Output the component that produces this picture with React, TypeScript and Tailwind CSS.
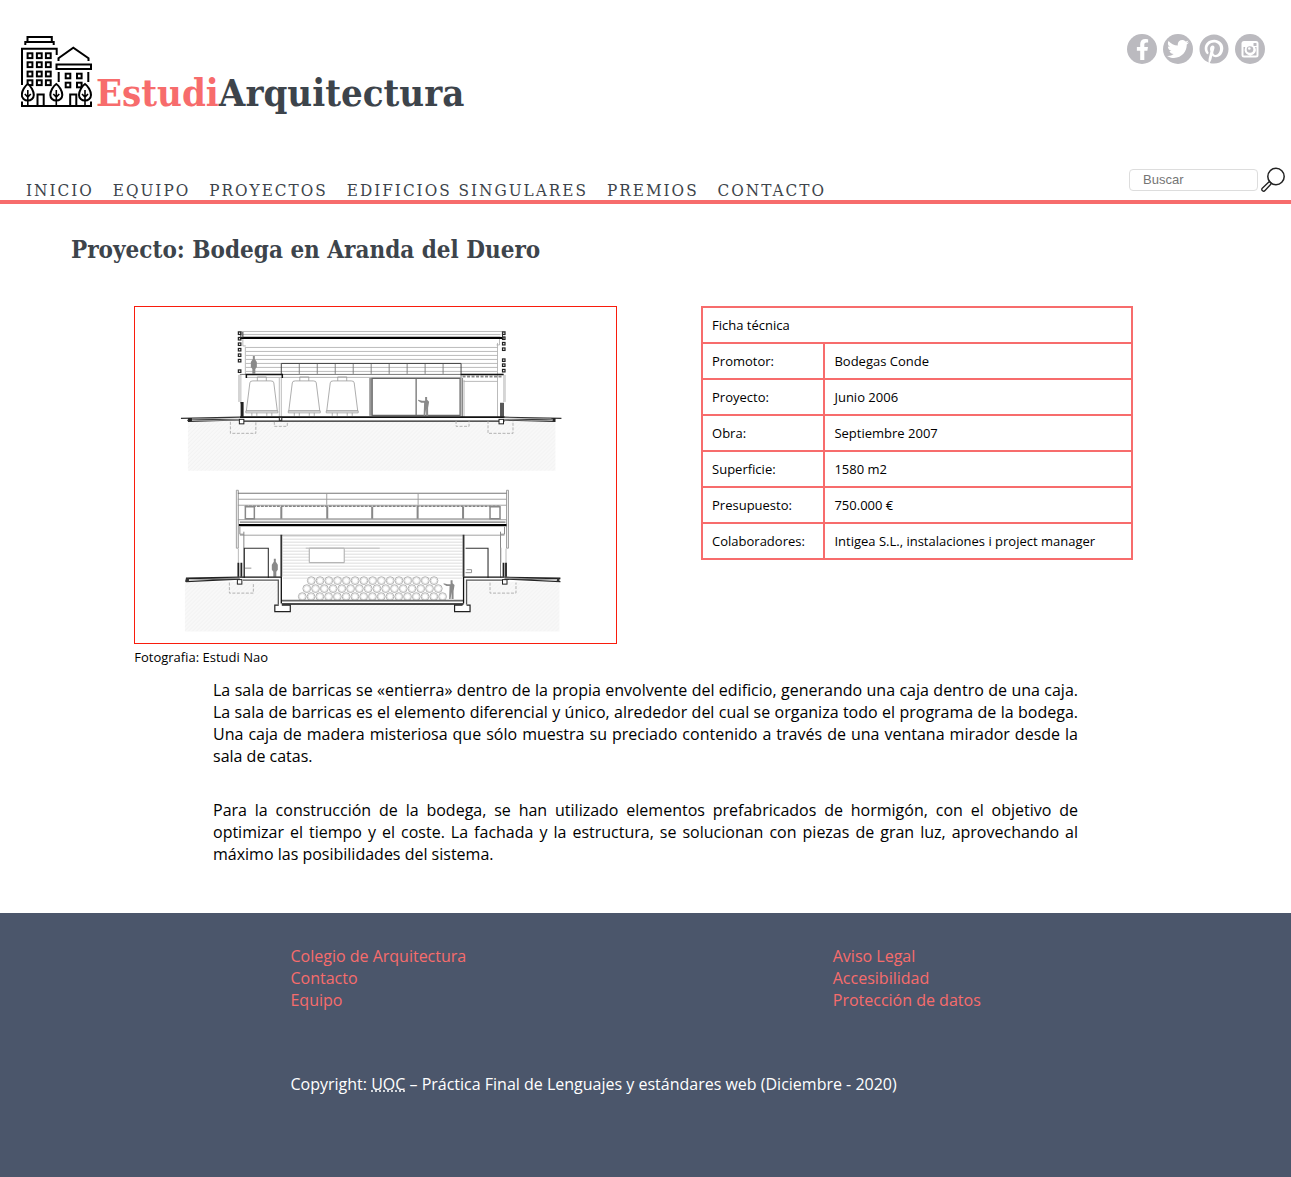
import React from "react";
import { FaFacebookF, FaTwitter, FaPinterest } from "react-icons/fa";

const slab = "font-['Roboto_Slab','DejaVu_Serif_Condensed','DejaVu_Serif',serif]";

function BuildingsLogo() {
  const tree = (x: number) => (
    <g key={x}>
      <path
        d={`M${x} 84 C${x + 3} 86 ${x + 6} 91 ${x + 6} 95 A6 5.5 0 0 1 ${x - 6} 95 C${x - 6} 91 ${x - 3} 86 ${x} 84Z`}
        fill="#fff"
      />
      <path d={`M${x} 90V106M${x - 3} 94L${x} 97L${x + 3} 94`} strokeWidth="1.6" />
    </g>
  );
  return (
    <svg viewBox="21 36 71 71" className="h-[71px] w-[71px] shrink-0" fill="none" stroke="#000" strokeWidth="2" aria-hidden="true">
      <path d="M25.3 45V42H53.7V45M27.5 42V37H51.8V42M22 85V48.7H56.7V55" />
      {[55.7, 64.7, 74, 82.7].map((y) =>
        [30, 39.3, 48.3].map((x) => <rect key={`${x}-${y}`} x={x - 2.4} y={y - 2.4} width="4.8" height="4.8" />)
      )}
      <path d="M58.5 61V58.3L73.3 47.7L88.5 58.3V61M56.5 64.5H91V69H56.5ZM58.7 72V82M88.3 72V82" />
      {[76, 85].map((y) =>
        [68, 79.3].map((x) => <rect key={`${x}-${y}`} x={x - 2.3} y={y - 2.3} width="4.6" height="4.6" />)
      )}
      <path d="M37.5 106V94.5H43.7V106M70.2 106V94.5H76.3V106" />
      {[27.8, 56.3, 85].map(tree)}
      <path d="M22 101.5V106H91V101.5" />
    </svg>
  );
}

function InstagramGlyph() {
  return (
    <svg viewBox="0 0 30 30" className="h-full w-full" aria-hidden="true">
      <circle cx="15" cy="15" r="15" fill="#bbbabf" />
      <rect x="6.5" y="7" width="17" height="16.5" rx="2.5" fill="#fff" />
      <path d="M8.5 13H10.5A5.5 5.5 0 1 0 20 13H21.500V21.500H8.500Z" fill="#bbbabf" />
      <circle cx="15" cy="15.500" r="5" fill="#fff" />
      <circle cx="15" cy="15.500" r="3.300" fill="#bbbabf" />
      <circle cx="14.300" cy="14.500" r="1.300" fill="#fff" />
      <rect x="18.500" y="9" width="3" height="3" rx="0.500" fill="#bbbabf" />
    </svg>
  );
}

function SearchGlyph() {
  return (
    <svg viewBox="0 0 26 26" className="h-[26px] w-[26px]" fill="none" stroke="#222" strokeWidth="1.3" aria-hidden="true">
      <circle cx="16" cy="9.5" r="8.2" strokeWidth="1.5" />
      <path d="M9.400 14.500L11.500 16.500L5 23.500A1.600 1.600 0 0 1 2.300 21.200Z" />
    </svg>
  );
}

const range = (n: number) => Array.from({ length: n }, (_, i) => i);

function Tank({ x }: { x: number }) {
  return (
    <g fill="none" stroke="#999" strokeWidth="0.8">
      <path d={`M${x - 12} 383Q${x - 12} 381 ${x - 9} 381H${x + 9}Q${x + 12} 381 ${x + 12} 383L${x + 15.5} 411H${x - 15.5}Z`} fill="#fff" />
      <path d={`M${x - 4.5} 381V377H${x + 4.5}V381M${x - 16} 411H${x + 16}V413H${x - 16}ZM${x - 10} 413V416M${x - 5} 413V416M${x + 5} 413V416M${x + 10} 413V416`} />
    </g>
  );
}

function StandingFigure({ x, y }: { x: number; y: number }) {
  return (
    <path
      d={`M${x - 1} ${y}H${x + 1}V${y + 3}L${x + 3} ${y + 6}V${y + 11}L${x + 1.5} ${y + 13}V${y + 18}H${x - 1.5}V${y + 13}L${x - 3} ${y + 11}V${y + 6}L${x - 1} ${y + 3}Z`}
      fill="#8a8a8a"
    />
  );
}

function PointingFigure({ x, y }: { x: number; y: number }) {
  return (
    <path
      d={`M${x - 1} ${y}H${x + 1}V${y + 3}L${x + 3} ${y + 5}L${x + 2} ${y + 11}V${y + 19}H${x}V${y + 12}L${x - 1} ${y + 19}H${x - 2.5}L${x - 2} ${y + 6}H${x - 5}L${x - 8} ${y + 4}V${y + 3}L${x - 4} ${y + 4}H${x - 1}Z`}
      fill="#8a8a8a"
    />
  );
}

function WinerySections() {
  return (
    <svg viewBox="135 307 481 336" className="block h-auto w-full" fill="none" role="img" aria-label="Secciones de la bodega">
      <defs>
        <pattern id="soil" width="4" height="4" patternUnits="userSpaceOnUse">
          <rect width="4" height="4" fill="#f8f8f8" />
          <path d="M0 4L4 0" stroke="#efefef" strokeWidth="0.8" />
        </pattern>
      </defs>

      {/* upper section */}
      <rect x="188" y="421" width="368" height="50" fill="url(#soil)" />
      <g stroke="#aaa" strokeWidth="0.8">
        <path d="M238 331.500H506M243 334.500H501M243 336.500H501" />
        {[347.5, 351.5, 355.5, 359.5, 363.5, 367.5, 371.5].map((y) => (
          <path key={y} d={`M246 ${y}H498`} />
        ))}
        <path d="M243 338V346H246M500 338V345H497M245.500 347V375M498 343V417M239 375V402M241 375V402M504 375V402M505.500 375V402M246.500 377.500H461M279.500 378V417M281.500 378V417M464.500 380V417M464 381.500H498" />
      </g>
      <rect x="238.5" y="375" width="2.5" height="27" fill="#d5d5d5" />
      <rect x="503.5" y="375" width="2.5" height="27" fill="#d5d5d5" />
      <path d="M240 338H504" stroke="#000" strokeWidth="2" />
      <g stroke="#222" strokeWidth="1.2">
        {[332, 337.5, 343, 348.5, 354, 359.5, 370].map((y) => (
          <rect key={y} x="238.5" y={y} width="2.5" height="2.5" />
        ))}
        {[332, 337, 342.5, 348, 359, 364, 369.5].map((y) => (
          <rect key={y} x="503" y={y} width="2.5" height="2.5" />
        ))}
      </g>
      <path d="M241 332V338M243 332V338M503 332V338" stroke="#333" />
      <path d="M281.500 374.500V363.500H461.500V374.500" stroke="#444" />
      {range(9).map((i) => (
        <path key={i} d={`M${299.5 + i * 18} 364V374`} stroke="#777" strokeWidth="0.9" />
      ))}
      <path d="M240 374.500H504" stroke="#777" />
      <path d="M246.500 378V374.500H282.500V378M461 374.500H504" stroke="#111" strokeWidth="1.5" />
      <path d="M463 376.500H503" stroke="#888" strokeWidth="2" strokeDasharray="3 1.5" />
      <Tank x={262} />
      <Tank x={304.5} />
      <Tank x={342.5} />
      <path d="M371 378V416" stroke="#999" strokeWidth="3" />
      <path d="M372.500 378.500H460.500V415.500H372.500ZM416.500 378.500V415.500" stroke="#666" strokeWidth="1.2" />
      <path d="M461.500 375V417M463 378V417" stroke="#777" strokeWidth="0.9" />
      <StandingFigure x={254} y={356} />
      <PointingFigure x={426.5} y={397} />
      <path d="M240.500 403H243V417M241.500 403V417M501.500 403V417M503.500 403V417" stroke="#222" strokeWidth="1.5" />
      <path d="M240 417.300H505" stroke="#111" strokeWidth="1.800" />
      <path d="M240 421.200H505" stroke="#222" strokeWidth="1.300" />
      <path d="M181 418.500L240 417.300M504 417.300L562 418.500" stroke="#333" strokeWidth="1.100" />
      <path d="M188 419L240 420.200M188 421.500L240 420.200M556 419L504 420.200M556 421.500L504 420.200" stroke="#222" strokeWidth="1.100" />
      <path d="M192 418.500L240 419.500M552 418.500L504 419.500" stroke="#888" strokeWidth="0.900" />
      <path d="M187 421L189 418.500H192V421.500ZM553 421L554 418.500H556V421.500Z" fill="#222" />
      <g stroke="#222" fill="#fff">
        <rect x="239.5" y="419.5" width="4.5" height="4.5" />
        <rect x="499.5" y="419.5" width="4.5" height="4.5" />
        <rect x="279.5" y="417.5" width="2.5" height="3" />
      </g>
      <path d="M230.500 422V433.500H256V422M274.500 422V426.500H287.500V422M456.500 421V426.500H469.500V421M488.500 421V433.500H513.500V421" stroke="#aaa" strokeWidth="0.9" strokeDasharray="3 1.5" />

      {/* lower section */}
      <path d="M185 582H278V605H467V582H560V632H185Z" fill="url(#soil)" />
      <path d="M275 605H470V632H275Z" fill="url(#soil)" />
      <g stroke="#999" strokeWidth="0.9">
        <path d="M236.500 490.500H238.500V548.500H236.500ZM507 490.500H509V548.500H507Z" fill="#eee" />
        <path d="M238 493.500H507" stroke="#666" />
        <path d="M238 499.500H507M238 505.500H507M238 520H507M327 493.500V505M418.500 493.500V505M240 535.500H505" />
      </g>
      <path d="M245 506.500H501" stroke="#555" strokeDasharray="3 1" />
      <path d="M245 519H501" stroke="#aaa" />
      <path d="M281.500 507V519M327.500 507V519M372.500 507V519M418 507V519M463.500 507V519" stroke="#888" strokeWidth="2" />
      <path d="M245.500 507H254.500V519H245.500ZM490.500 507H500.500V519H490.500Z" stroke="#888" strokeWidth="1.5" />
      <path d="M240 522.500H506" stroke="#777" strokeWidth="1.2" />
      <path d="M239 525.500H507" stroke="#000" strokeWidth="2.2" />
      <path d="M240 527V534.500H244M244 532V578M505 527V534.500H501M501 532V578" stroke="#888" />
      <path d="M238.500 549V578M506.500 549V578M501.500 548V563" stroke="#aaa" strokeWidth="0.8" />
      {range(15).map((i) => (
        <path key={i} d={`M283 ${536.5 + i * 3}H463`} stroke="#d9d9d9" strokeWidth="0.9" />
      ))}
      <path d="M309.500 548.500H344.500V563H309.500Z" fill="#fff" stroke="#aaa" />
      <path d="M306 548.500H380" stroke="#bbb" />
      <path d="M281.500 535V577M464 535V577" stroke="#333" strokeWidth="1.8" />
      <path d="M244.500 578V548.500H268.500V578M466 548.500H488.500V578" stroke="#333" strokeWidth="1.1" />
      <path d="M245 568.500H251.500M467 570H472V573H466" stroke="#888" strokeWidth="0.9" />
      <g stroke="#aaa" strokeWidth="0.9" fill="#fff">
        {range(15).map((i) => <circle key={i} cx={311.5 + i * 8.78} cy="581" r="3.9" />)}
        {range(16).map((i) => <circle key={i} cx={307 + i * 8.78} cy="589" r="3.9" />)}
        {range(17).map((i) => <circle key={i} cx={302.5 + i * 8.78} cy="597" r="3.9" />)}
      </g>
      <g stroke="#ccc" strokeWidth="0.6">
        {range(15).map((i) => <circle key={i} cx={311.5 + i * 8.78} cy="581" r="2.9" />)}
        {range(16).map((i) => <circle key={i} cx={307 + i * 8.78} cy="589" r="2.9" />)}
        {range(17).map((i) => <circle key={i} cx={302.5 + i * 8.78} cy="597" r="2.9" />)}
      </g>
      <StandingFigure x={275} y={559} />
      <PointingFigure x={452} y={580.5} />
      <path d="M282 601H464" stroke="#666" strokeWidth="1.6" />
      <path d="M282 604.500H464" stroke="#111" strokeWidth="1.5" />
      <path d="M240 577.500H281.500V604M505 577.500H464V604" stroke="#111" strokeWidth="1.3" />
      <path d="M243 580.500H278.500V605M503 580.500H467V605" stroke="#555" strokeWidth="1.3" />
      <path d="M279 605.500H275V612H290.500V605.500H282M467 605.500H470.500V612H455V605.500H463" fill="#fff" stroke="#222" strokeWidth="1.2" />
      <path d="M238.500 563V577M241.500 563V577M504 563V577M506.500 563V577" stroke="#222" strokeWidth="1.8" />
      <path d="M186 578.500L240 577.500M186 579L240 579.500M186 582L240 579.500M505 577.500L561 578.500M505 579.500L561 579M505 579.500L561 582" stroke="#222" strokeWidth="1.1" />
      <path d="M185 582L186 578.500H189V582ZM557 582L558 578.500H560V582Z" fill="#333" />
      <g stroke="#222" fill="#fff">
        <rect x="237.5" y="580" width="4.5" height="4.5" />
        <rect x="503" y="580" width="4.5" height="4.5" />
      </g>
      <path d="M229.500 583V593.500H253.500V583M490.500 583V593.500H516.500V583" stroke="#aaa" strokeWidth="0.9" strokeDasharray="3 1.5" />
    </svg>
  );
}

const navItems = ["Inicio", "Equipo", "Proyectos", "Edificios singulares", "Premios", "Contacto"];

const facts = [
  ["Promotor:", "Bodegas Conde"],
  ["Proyecto:", "Junio 2006"],
  ["Obra:", "Septiembre 2007"],
  ["Superficie:", "1580 m2"],
  ["Presupuesto:", "750.000 €"],
  ["Colaboradores:", "Intigea S.L., instalaciones i project manager"],
];

const badge = "flex h-[30px] w-[30px] items-center justify-center rounded-full";

export default function App() {
  return (
    <div className="min-h-screen bg-white font-['Open_Sans',sans-serif] text-base leading-[22px] text-black">
      <header className="border-b-4 border-[#f76c6c]">
        <div className="flex items-start justify-between pt-[34px] pr-[26px] pl-[21px]">
          <a href="#inicio" className={`flex items-end gap-1 pt-0.5 text-[38px] leading-[44px] font-bold ${slab}`}>
            <BuildingsLogo />
            <span className="-mb-2 text-[#3d444b]">
              <span className="text-[#f76c6c]">Estudi</span>Arquitectura
            </span>
          </a>
          <div className="flex gap-1.5">
            <a href="#facebook" aria-label="Facebook" className={`${badge} bg-[#bbbabf] text-white`}>
              <FaFacebookF size={21} />
            </a>
            <a href="#twitter" aria-label="Twitter" className={`${badge} bg-[#bbbabf] text-white`}>
              <FaTwitter size={22} />
            </a>
            <a href="#pinterest" aria-label="Pinterest" className={`${badge} text-[#bbbabf]`}>
              <FaPinterest size={30} />
            </a>
            <a href="#instagram" aria-label="Instagram" className={badge}>
              <InstagramGlyph />
            </a>
          </div>
        </div>
        <div className="flex items-end justify-between pt-[60px] pr-[5px] pl-[26px]">
          <nav className={`flex gap-[19px] text-[17px] leading-5 tracking-[2px] text-[#3d444b] uppercase ${slab}`}>
            {navItems.map((item) => (
              <a key={item} href={`#${item}`}>{item}</a>
            ))}
          </nav>
          <form className="flex items-center gap-0.5 pb-[7px]" onSubmit={(e) => e.preventDefault()}>
            <input
              type="text"
              aria-label="Buscar"
              placeholder="Buscar"
              className="h-[22px] w-[129px] rounded border border-[#ddd] pl-[13px] font-['Liberation_Sans',sans-serif] text-[13px] placeholder:text-[#757575]"
            />
            <button type="submit" aria-label="Enviar búsqueda">
              <SearchGlyph />
            </button>
          </form>
        </div>
      </header>

      <main>
        <h1 className={`pt-[30px] pl-[5.5%] text-2xl leading-8 font-bold text-[#3d444b] ${slab}`}>
          Proyecto: Bodega en Aranda del Duero
        </h1>
        <div className="flex items-start pt-10 pl-[10.4%] text-[13px]">
          <figure className="w-[41.7%]">
            <div className="border border-[#f91c0c]">
              <WinerySections />
            </div>
            <figcaption className="pt-1 leading-[18px]">Fotografia: Estudi Nao</figcaption>
          </figure>
          <table className="ml-[7.3%] w-[37.3%] table-fixed border-collapse text-left leading-[18px]">
            <colgroup>
              <col className="w-[28.5%]" />
              <col />
            </colgroup>
            <thead>
              <tr>
                <th colSpan={2} className="border-2 border-[#f76c6c] px-[9px] py-2 font-normal">Ficha técnica</th>
              </tr>
            </thead>
            <tbody>
              {facts.map(([label, value]) => (
                <tr key={label}>
                  <th scope="row" className="border-2 border-[#f76c6c] px-[9px] py-2 font-normal">{label}</th>
                  <td className="border-2 border-[#f76c6c] px-[9px] py-2">{value}</td>
                </tr>
              ))}
            </tbody>
          </table>
        </div>
        <div className="mx-[16.5%] flex flex-col gap-8 pt-[13px] pb-12 text-justify">
          <p>
            La sala de barricas se «entierra» dentro de la propia envolvente del edificio, generando una caja dentro de
            una caja. La sala de barricas es el elemento diferencial y único, alrededor del cual se organiza todo el
            programa de la bodega. Una caja de madera misteriosa que sólo muestra su preciado contenido a través de una
            ventana mirador desde la sala de catas.
          </p>
          <p>
            Para la construcción de la bodega, se han utilizado elementos prefabricados de hormigón, con el objetivo de
            optimizar el tiempo y el coste. La fachada y la estructura, se solucionan con piezas de gran luz,
            aprovechando al máximo las posibilidades del sistema.
          </p>
        </div>
      </main>

      <footer className="bg-[#4b566b] pt-8 pb-[82px] pl-[22.5%] text-white">
        <div className="flex text-[#f76c6c]">
          <ul className="w-[54.2%]">
            <li><a href="#colegio">Colegio de Arquitectura</a></li>
            <li><a href="#contacto">Contacto</a></li>
            <li><a href="#equipo">Equipo</a></li>
          </ul>
          <ul>
            <li><a href="#aviso">Aviso Legal</a></li>
            <li><a href="#accesibilidad">Accesibilidad</a></li>
            <li><a href="#datos">Protección de datos</a></li>
          </ul>
        </div>
        <p className="pt-[62px]">
          Copyright: <abbr title="Universitat Oberta de Catalunya">UOC</abbr> – Práctica Final de Lenguajes y estándares
          web (Diciembre - 2020)
        </p>
      </footer>
    </div>
  );
}
